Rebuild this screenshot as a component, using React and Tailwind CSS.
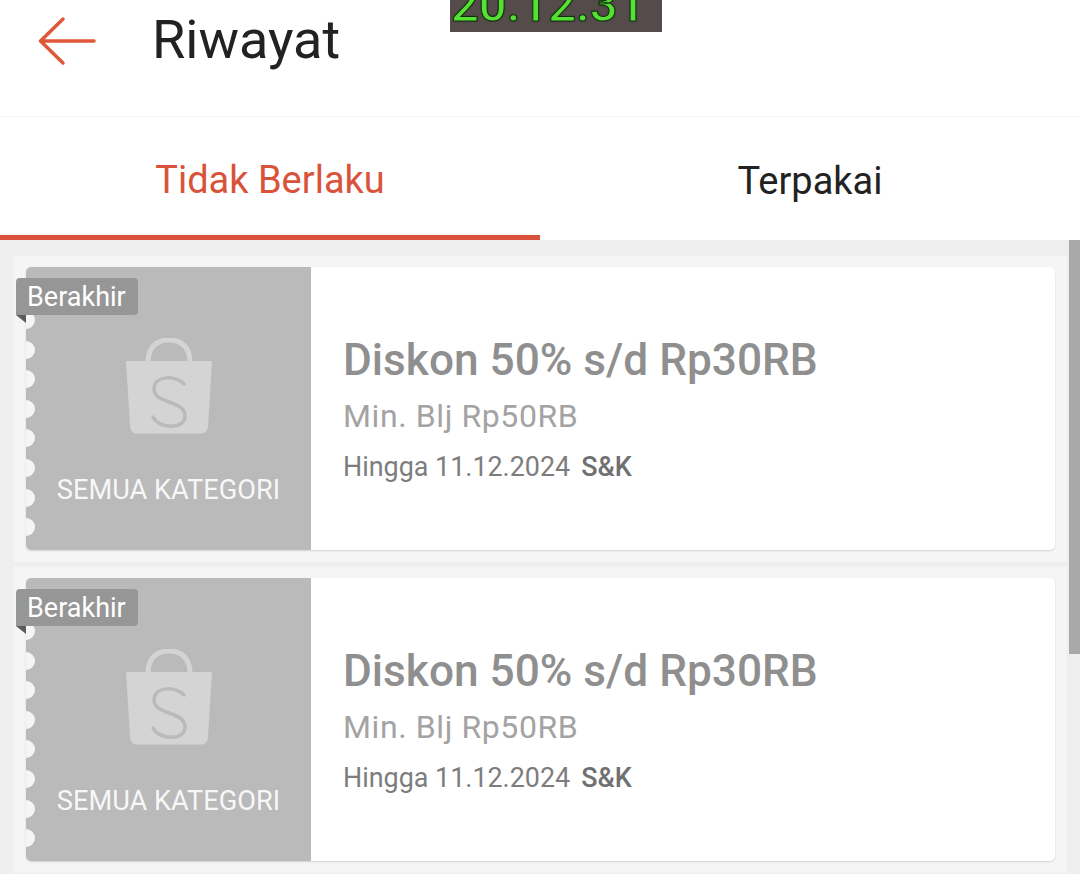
const PERFS = [0, 1, 2, 3, 4, 5, 6, 7];

function Bag() {
  return (
    <svg width="86" height="96" viewBox="0 0 86 96" className="block">
      <path d="M22 24 C22 9 31 2 43 2 C55 2 64 9 64 24" fill="none" stroke="#d4d4d4" strokeWidth="5" />
      <path d="M0 23 H86 L82 88 C81.700 93 79 95.500 75 95.500 H11 C7 95.500 4.300 93 4 88 Z" fill="#d4d4d4" />
      <path d="M58 46 C52 38 28 36 28 51 C28 66 59 62 59 78 C59 92 33 91 27 79" fill="none" stroke="#bababa" strokeWidth="3.500" strokeLinecap="round" />
    </svg>
  );
}

function Voucher() {
  return (
    <div className="bg-[#f5f5f5] pt-[11px] pb-[12px] pl-[12px] pr-[12px]">
      <div className="relative flex h-[283px] w-[1029px] rounded-[5px] bg-white shadow-[0_1px_2px_rgba(0,0,0,0.14)]">
        <div className="relative flex w-[285px] shrink-0 flex-col items-center overflow-hidden rounded-l-[5px] bg-[#bababa] pt-[71px]">
          {PERFS.map((i) => (
            <span
              key={i}
              style={{ top: 44 + i * 29.6 }}
              className="absolute left-[-9px] h-[18px] w-[18px] rounded-full bg-[#f5f5f5]"
            />
          ))}
          <Bag />
          <div className="mt-[38px] text-[27.200px] leading-[36px] text-[#f7f7f7]">SEMUA KATEGORI</div>
        </div>
        <div className="flex flex-col pl-[32px] pt-[67px]">
          <div className="text-[44.200px] font-medium leading-[52px] text-[#8f8f8f]">Diskon 50% s/d Rp30RB</div>
          <div className="mt-[9px] text-[32px] leading-[42px] tracking-[0.6px] text-[#a3a3a3]">Min. Blj Rp50RB</div>
          <div className="mt-[12px] flex items-center text-[26.900px] leading-[36px] text-[#7d7d7d]">
            <span>Hingga 11.12.2024</span>
            <span className="ml-[11px] font-medium text-[#707070]">S&amp;K</span>
          </div>
        </div>
        <div className="absolute left-[-10px] top-[11px] flex h-[37px] w-[122px] items-center rounded-[4px] rounded-bl-none bg-[#969696] pl-[11px] pt-[1px] text-[27px] text-white">
          Berakhir
        </div>
        <svg width="10" height="8" viewBox="0 0 10 8" className="absolute left-[-10px] top-[48px]">
          <path d="M0 0 H10 V8 Z" fill="#5c5c5c" />
        </svg>
      </div>
    </div>
  );
}

export default function App() {
  return (
    <div className="relative h-[874px] w-[1080px] overflow-hidden bg-white font-['Roboto',sans-serif]">
      <header className="flex h-[117px] items-start border-b border-[#f5f5f5] bg-white pl-[37px]">
        <svg width="60" height="52" viewBox="0 0 60 52" className="mt-[15px]">
          <path d="M3.500 26 H57 M26 4 L3.500 26 L26 48" fill="none" stroke="#e0583a" strokeWidth="3.500" strokeLinecap="round" strokeLinejoin="round" />
        </svg>
        <h1 className="ml-[55px] mt-[8px] text-[54px] font-normal leading-[64px] text-[#222222]">Riwayat</h1>
      </header>

      <div className="absolute left-[450px] top-0 flex h-[32px] w-[212px] items-start overflow-hidden bg-[#564b4b] pl-[1px]">
        <span className="mt-[-19px] text-[49px] font-medium leading-[48px] text-[#55e033] [-webkit-text-stroke:1px_#0f2f0a] [text-shadow:0_0_2px_#0f2f0a]">20.12.31</span>
      </div>

      <nav className="flex h-[123px] bg-white">
        <div className="flex w-[540px] items-center justify-center border-b-[5px] border-[#d9533a] pt-[8px] text-[38px] text-[#d9533a]">
          Tidak Berlaku
        </div>
        <div className="flex w-[540px] items-center justify-center pb-[1px] pt-[6px] text-[38px] text-[#222222]">Terpakai</div>
      </nav>

      <main className="relative h-[634px] bg-[#efefef] pl-[14px] pr-[13px] pt-[16px]">
        <div className="flex flex-col gap-[5px]">
          <Voucher />
          <Voucher />
        </div>
        <div className="absolute right-0 top-0 h-[414px] w-[11px] bg-[#a9a9a9]" />
      </main>
    </div>
  );
}
